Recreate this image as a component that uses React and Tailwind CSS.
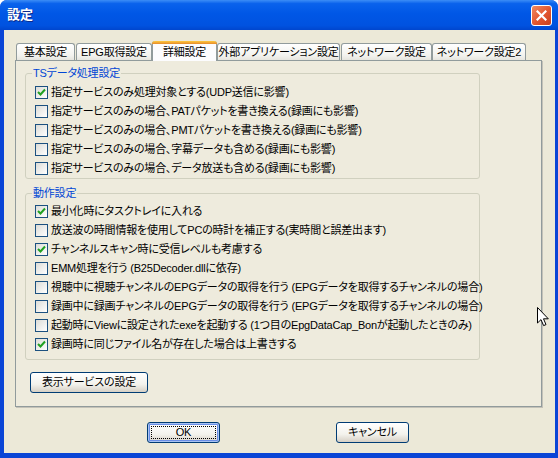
import React from 'react';

const tabs = [
  { label: '基本設定', cls: 'w-[59px]' },
  { label: 'EPG取得設定', cls: 'w-[76px] ml-[1px]' },
  { label: '詳細設定', cls: 'w-[65px]', active: true },
  { label: '外部アプリケーション設定', cls: 'w-[123px]' },
  { label: 'ネットワーク設定', cls: 'w-[91px] ml-[1px]' },
  { label: 'ネットワーク設定2', cls: 'w-[94px]' },
];

const tsRows = [
  { text: '指定サービスのみ処理対象とする(UDP送信に影響)', on: true },
  { text: '指定サービスのみの場合、PATパケットを書き換える(録画にも影響)' },
  { text: '指定サービスのみの場合、PMTパケットを書き換える(録画にも影響)' },
  { text: '指定サービスのみの場合、字幕データも含める(録画にも影響)' },
  { text: '指定サービスのみの場合、データ放送も含める(録画にも影響)' },
];

const actRows = [
  { text: '最小化時にタスクトレイに入れる', on: true },
  { text: '放送波の時間情報を使用してPCの時計を補正する(実時間と誤差出ます)' },
  { text: 'チャンネルスキャン時に受信レベルも考慮する', on: true },
  { text: 'EMM処理を行う (B25Decoder.dllに依存)' },
  { text: '視聴中に視聴チャンネルのEPGデータの取得を行う (EPGデータを取得するチャンネルの場合)' },
  { text: '録画中に録画チャンネルのEPGデータの取得を行う (EPGデータを取得するチャンネルの場合)' },
  { text: '起動時にViewに設定されたexeを起動する (1つ目のEpgDataCap_Bonが起動したときのみ)' },
  { text: '録画時に同じファイル名が存在した場合は上書きする', on: true },
];

function CheckBox({ on }) {
  return (
    <span className="w-[13px] h-[13px] shrink-0 border border-[#1C5180] bg-[linear-gradient(135deg,#DCDCD7,#FFFFFF)] flex items-center justify-center">
      {on && (
        <svg width="11" height="11" viewBox="0 0 11 11">
          <polyline points="2,5 4.5,7.5 9,2.5" fill="none" stroke="#21A121" strokeWidth="2" />
        </svg>
      )}
    </span>
  );
}

function Row({ text, on }) {
  return (
    <div className="h-[19px] flex items-center gap-[3px] ml-[3px] whitespace-nowrap">
      <CheckBox on={on} />
      <span>{text}</span>
    </div>
  );
}

function Group({ title, rows, cls }) {
  return (
    <fieldset className={`w-[455px] min-w-0 border border-[#D0D0BF] rounded-[3px] pl-[6px] ${cls}`}>
      <legend className="px-[1px] leading-[15px] text-[#0046D5]">{title}</legend>
      {rows.map((r, i) => <Row key={i} {...r} />)}
    </fieldset>
  );
}

function XpButton({ children, cls, focus }) {
  return (
    <button className={`relative h-[21px] border border-[#003C74] rounded-[3px] bg-[linear-gradient(#FFFFFF,#F3F2EC_60%,#D6D0C5)] text-black flex items-center justify-center ${focus ? 'shadow-[inset_0_0_0_1px_#A9C3F2,inset_0_0_0_2px_#6B8EE6]' : ''} ${cls}`}>
      {focus && <span className="absolute inset-[3px] border border-dotted border-black" />}
      <span className="relative">{children}</span>
    </button>
  );
}

export default function App() {
  return (
    <div className="relative w-[558px] h-[458px] flex flex-col bg-[#0A45D6] rounded-t-[7px] overflow-hidden text-[11px] tracking-[-0.2px] text-black font-['Liberation_Sans','Noto_Sans_CJK_JP',sans-serif] [font-feature-settings:'palt']">
      {/* title bar */}
      <div className="h-[30px] shrink-0 flex items-center px-[7px] bg-[linear-gradient(#3C8DF6_0%,#0A62EC_12%,#0057E6_45%,#0052E0_85%,#0046CE_100%)]">
        <span className="text-white font-bold text-[13px] tracking-normal [text-shadow:1px_1px_#0B2A8C]">設定</span>
        <div className="ml-auto mr-[-1px] w-[21px] h-[21px] rounded-[3px] border border-white bg-[linear-gradient(135deg,#F08A62,#E2552E_55%,#C8401E)] flex items-center justify-center">
          <svg width="11" height="11" viewBox="0 0 11 11">
            <path d="M1.5 1.5 L9.5 9.5 M9.5 1.5 L1.5 9.5" stroke="white" strokeWidth="2.2" strokeLinecap="square" />
          </svg>
        </div>
      </div>

      {/* body */}
      <div className="flex-1 ml-[4px] mr-[3px] mb-[5px] bg-[#ECE9D8] pl-[11px] flex flex-col">
        <div className="mt-[11px] h-[19px] ml-[1px] flex items-end">
          {tabs.map((t, i) =>
            t.active ? (
              <div key={i} className={`relative z-10 -mb-[1px] h-[20px] border-x border-[#919B9C] rounded-t-[3px] bg-[#FCFCFE] flex flex-col ${t.cls}`}>
                <div className="h-[3px] -mx-[1px] rounded-t-[3px] bg-[linear-gradient(#FFC83C,#E68B2C)]" />
                <div className="flex-1 flex items-center justify-center leading-none pb-[1px]">{t.label}</div>
              </div>
            ) : (
              <div key={i} className={`h-[17px] border border-b-0 border-[#919B9C] rounded-t-[3px] bg-[linear-gradient(#FFFFFF,#F3F3EF_70%,#E6E5DE)] flex items-center justify-center leading-none whitespace-nowrap ${t.cls}`}>
                {t.label}
              </div>
            )
          )}
        </div>

        <div className="w-[527px] h-[347px] border border-[#919B9C] shadow-[1px_1px_0_#C4C2B8] bg-[#EEEBDD] pl-[9px] pt-[5px] flex flex-col">
          <Group title="TSデータ処理設定" rows={tsRows} cls="[&>div:first-of-type]:mt-[2px]" />
          <Group title="動作設定" rows={actRows} cls="mt-[7px] pb-[5px] [&>div:first-of-type]:mt-[1px]" />
          <XpButton cls="mt-[12px] ml-[5px] w-[118px]">表示サービスの設定</XpButton>
        </div>

        <div className="mt-[15px] flex">
          <XpButton cls="ml-[132px] w-[73px]" focus>OK</XpButton>
          <XpButton cls="ml-[116px] w-[73px]">キャンセル</XpButton>
        </div>
      </div>

      {/* mouse pointer */}
      <svg className="absolute left-[537px] top-[307px]" width="13" height="20" viewBox="0 0 13 20">
        <path d="M0.5 0.5 L0.5 16 L4 12.6 L6.6 18.6 L9 17.6 L6.5 11.8 L11.3 11.8 Z" fill="white" stroke="black" strokeWidth="1" />
      </svg>
    </div>
  );
}
